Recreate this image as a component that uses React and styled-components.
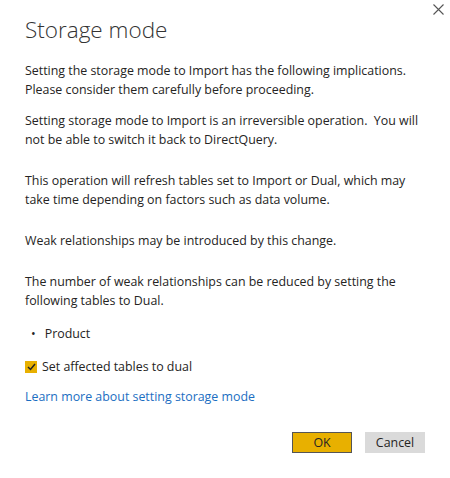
import React from "react";
import styled, { createGlobalStyle } from "styled-components";

const Global = createGlobalStyle`
  body {
    margin: 0;
    background: #fff;
    font-family: "Open Sans", "Noto Sans", sans-serif;
    color: #252423;
  }
`;

const Dialog = styled.div`
  position: relative;
  width: 450px;
  height: 478px;
  box-sizing: border-box;
  padding: 14px 25px 0 25px;
  display: flex;
  flex-direction: column;
`;

const Close = styled.button`
  position: absolute;
  top: 0;
  right: 3px;
  width: 18px;
  height: 18px;
  padding: 0;
  border: none;
  background: none;
  cursor: pointer;
  display: flex;
  align-items: center;
  justify-content: center;
`;

const Title = styled.h1`
  margin: 0 0 15px;
  font-size: 22.5px;
  font-weight: 300;
  line-height: 32px;
  color: #333;
`;

const Para = styled.p`
  margin: 0 0 ${(p) => p.gap ?? 22}px;
  font-size: 12.4px;
  line-height: 19px;
  white-space: nowrap;
`;

const Bullets = styled.ul`
  margin: 0 0 14px;
  padding: 0;
  list-style: none;
  font-size: 12.4px;
  line-height: 19px;
`;

const Bullet = styled.li`
  display: flex;
  padding-left: 6px;
  gap: 9px;
  &::before {
    content: "•";
  }
`;

const CheckRow = styled.label`
  display: flex;
  align-items: center;
  gap: 5px;
  font-size: 12.4px;
  line-height: 19px;
  margin-bottom: 11px;
`;

const Box = styled.span`
  width: 12px;
  height: 12px;
  background: #e8b000;
  display: flex;
  align-items: center;
  justify-content: center;
`;

const Link = styled.a`
  align-self: flex-start;
  font-size: 12.4px;
  line-height: 19px;
  color: #1b6ec2;
  text-decoration: none;
`;

const Actions = styled.div`
  display: flex;
  justify-content: flex-end;
  gap: 13px;
  margin-top: 26px;
`;

const Button = styled.button`
  width: 60px;
  height: 21px;
  padding: 0;
  font-family: inherit;
  font-size: 12.4px;
  color: #252423;
  background: ${(p) => (p.$primary ? "#e8b000" : "#dadada")};
  border: 1px solid ${(p) => (p.$primary ? "#555" : "#dadada")};
  box-sizing: border-box;
  cursor: pointer;
`;

export default function App() {
  return (
    <>
      <Global />
      <Dialog>
        <Close aria-label="Close">
          <svg width="11" height="11" viewBox="0 0 11 11">
            <path d="M0.5 0.5 L10.5 10.5 M10.5 0.5 L0.5 10.5" stroke="#555" strokeWidth="1.1" />
          </svg>
        </Close>
        <Title>Storage mode</Title>
        <Para gap={12}>
          Setting the storage mode to Import has the following implications.
          <br />
          Please consider them carefully before proceeding.
        </Para>
        <Para>
          Setting storage mode to Import is an irreversible operation.&nbsp; You will
          <br />
          not be able to switch it back to DirectQuery.
        </Para>
        <Para>
          This operation will refresh tables set to Import or Dual, which may
          <br />
          take time depending on factors such as data volume.
        </Para>
        <Para>Weak relationships may be introduced by this change.</Para>
        <Para gap={14}>
          The number of weak relationships can be reduced by setting the
          <br />
          following tables to Dual.
        </Para>
        <Bullets>
          <Bullet>Product</Bullet>
        </Bullets>
        <CheckRow>
          <Box>
            <svg width="9" height="8" viewBox="0 0 9 8">
              <path d="M1 4 L3.5 6.5 L8 1" fill="none" stroke="#222" strokeWidth="1.5" />
            </svg>
          </Box>
          Set affected tables to dual
        </CheckRow>
        <Link href="#">Learn more about setting storage mode</Link>
        <Actions>
          <Button $primary>OK</Button>
          <Button>Cancel</Button>
        </Actions>
      </Dialog>
    </>
  );
}
